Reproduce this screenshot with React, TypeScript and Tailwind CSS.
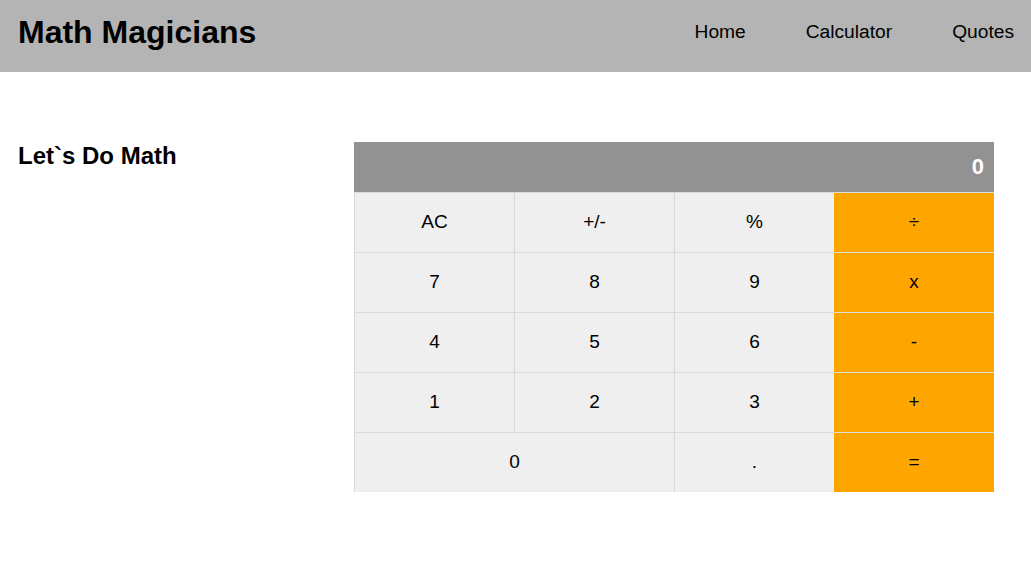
const keys: { label: string; span?: boolean; op?: boolean }[] = [
  { label: "AC" },
  { label: "+/-" },
  { label: "%" },
  { label: "÷", op: true },
  { label: "7" },
  { label: "8" },
  { label: "9" },
  { label: "x", op: true },
  { label: "4" },
  { label: "5" },
  { label: "6" },
  { label: "-", op: true },
  { label: "1" },
  { label: "2" },
  { label: "3" },
  { label: "+", op: true },
  { label: "0", span: true },
  { label: "." },
  { label: "=", op: true },
];

export default function App() {
  return (
    <div className="min-h-screen bg-white text-black font-['Liberation_Sans',Arial,sans-serif]">
      <header className="h-[72px] bg-[#b4b4b4] flex items-center justify-between pl-[18px] pr-[17px] pb-[8px]">
        <h1 className="text-[32px] font-bold leading-none">Math Magicians</h1>
        <nav className="flex items-center gap-[60px] text-[19.2px]">
          <a href="#">Home</a>
          <a href="#">Calculator</a>
          <a href="#">Quotes</a>
        </nav>
      </header>

      <main className="flex pt-[70px] pl-[18px]">
        <h2 className="w-[336px] text-[24px] font-bold leading-[28px]">Let`s Do Math</h2>
        <div className="w-[640px]">
          <div className="h-[50px] bg-[#929292] text-white text-[22px] font-bold flex items-center justify-end pr-[10px] pb-[2px]">
            0
          </div>
          <div className="grid grid-cols-4">
            {keys.map((k) => (
              <button
                key={k.label}
                className={
                  k.op
                    ? "h-[60px] bg-[#ffa500] border-t border-[#dcdcdc] text-[19px]"
                    : k.span
                      ? "col-span-2 h-[60px] bg-[#efefef] border-t border-l border-[#d9d9d9] text-[19px]"
                      : "h-[60px] bg-[#efefef] border-t border-l border-[#d9d9d9] text-[19px]"
                }
              >
                {k.label}
              </button>
            ))}
          </div>
        </div>
      </main>
    </div>
  );
}
